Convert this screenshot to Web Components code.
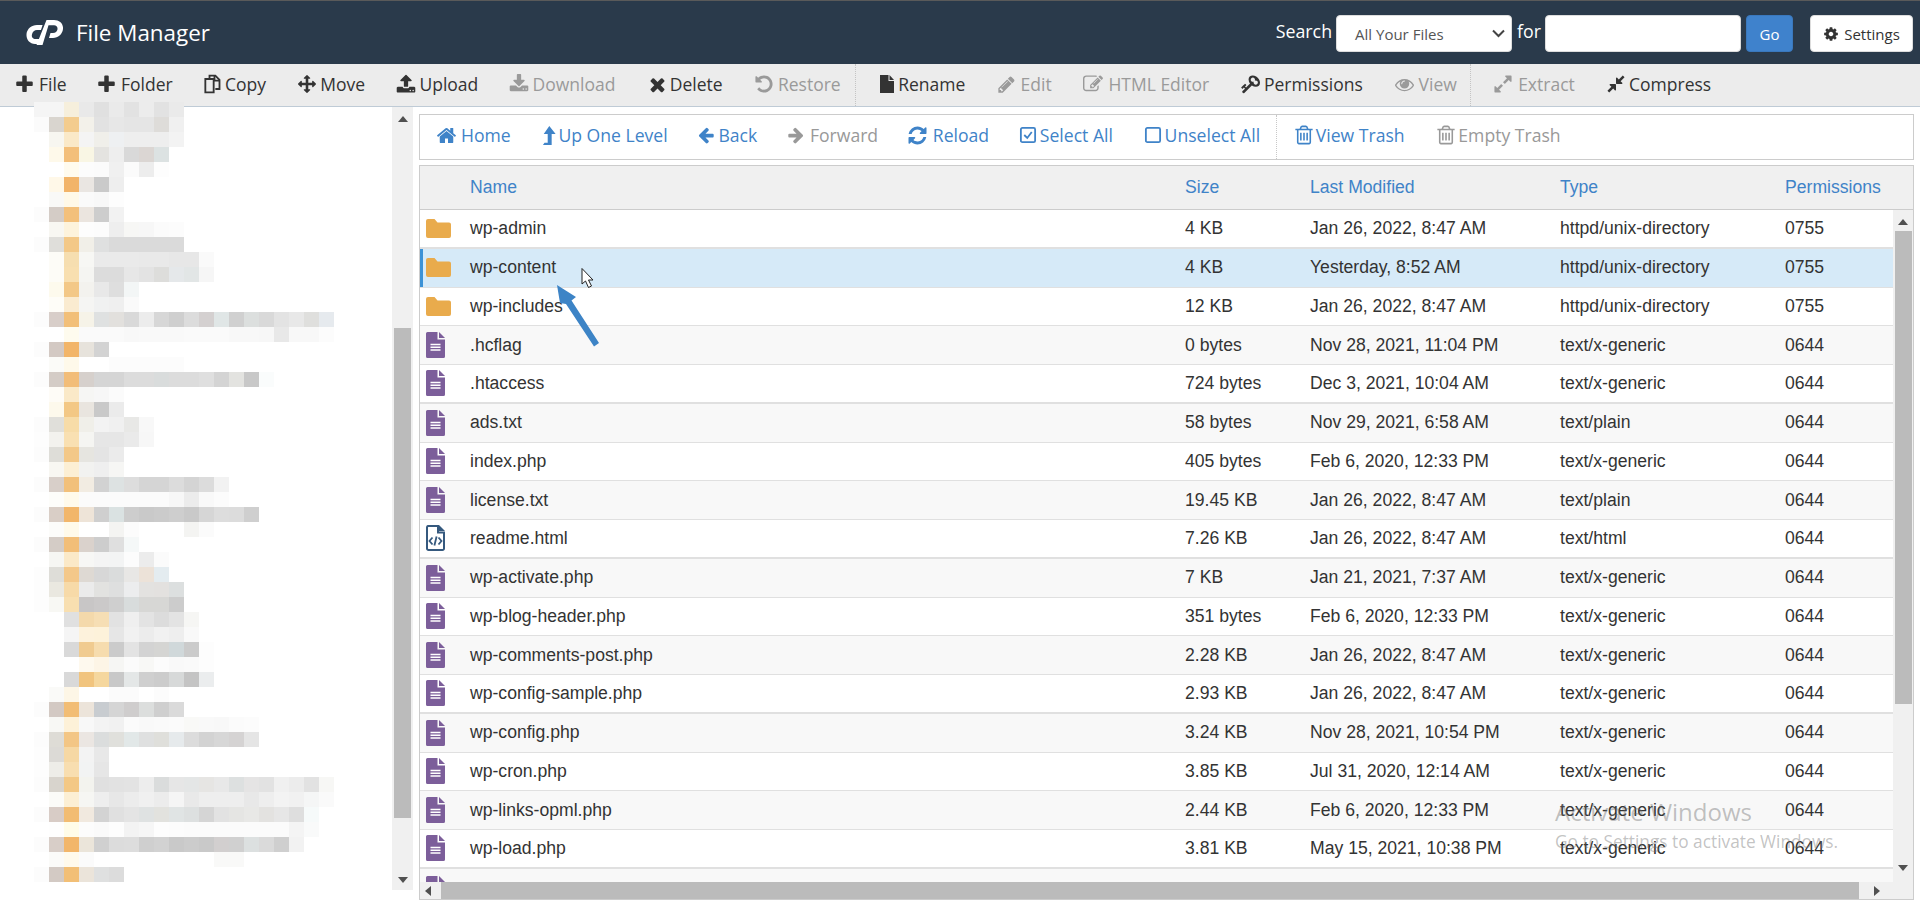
<!DOCTYPE html>
<html><head><meta charset="utf-8"><title>File Manager</title>
<style>
html,body{margin:0;padding:0;width:1920px;height:902px;overflow:hidden;background:#fff;font-family:"Open Sans",sans-serif}
</style></head><body>
<fm-app></fm-app>
<script>
const FA={
plus:'M1600 736v192q0 40-28 68t-68 28h-416v416q0 40-28 68t-68 28h-192q-40 0-68-28t-28-68v-416h-416q-40 0-68-28t-28-68v-192q0-40 28-68t68-28h416v-416q0-40 28-68t68-28h192q40 0 68 28t28 68v416h416q40 0 68 28t28 68z',
move:'M1792 896q0 26-19 45l-256 256q-19 19-45 19t-45-19-19-45v-128h-384v384h128q26 0 45 19t19 45-19 45l-256 256q-19 19-45 19t-45-19l-256-256q-19-19-19-45t19-45 45-19h128v-384h-384v128q0 26-19 45t-45 19-45-19l-256-256q-19-19-19-45t19-45l256-256q19-19 45-19t45 19 19 45v128h384v-384h-128q-26 0-45-19t-19-45 19-45l256-256q19-19 45-19t45 19l256 256q19 19 19 45t-19 45-45 19h-128v384h384v-128q0-26 19-45t45-19 45 19l256 256q19 19 19 45z',
upload:'M1344 1472q0-26-19-45t-45-19-45 19-19 45 19 45 45 19 45-19 19-45zm256 0q0-26-19-45t-45-19-45 19-19 45 19 45 45 19 45-19 19-45zm128-224v320q0 40-28 68t-68 28h-1472q-40 0-68-28t-28-68v-320q0-40 28-68t68-28h427q21 56 70.5 92t110.5 36h256q61 0 110.5-36t70.5-92h427q40 0 68 28t28 68zm-325-648q-17 40-59 40h-256v448q0 26-19 45t-45 19h-256q-26 0-45-19t-19-45v-448h-256q-42 0-59-40-17-39 14-69l448-448q18-19 45-19t45 19l448 448q31 30 14 69z',
download:'M1344 1344q0-26-19-45t-45-19-45 19-19 45 19 45 45 19 45-19 19-45zm256 0q0-26-19-45t-45-19-45 19-19 45 19 45 45 19 45-19 19-45zm128-224v320q0 40-28 68t-68 28h-1472q-40 0-68-28t-28-68v-320q0-40 28-68t68-28h465l135 136q58 56 136 56t136-56l136-136h464q40 0 68 28t28 68zm-325-569q17 41-14 70l-448 448q-18 19-45 19t-45-19l-448-448q-31-29-14-70 17-39 59-39h256v-448q0-26 19-45t45-19h256q26 0 45 19t19 45v448h256q42 0 59 39z',
times:'M1490 1322q0 40-28 68l-136 136q-28 28-68 28t-68-28l-294-294-294 294q-28 28-68 28t-68-28l-136-136q-28-28-28-68t28-68l294-294-294-294q-28-28-28-68t28-68l136-136q28-28 68-28t68 28l294 294 294-294q28-28 68-28t68 28l136 136q28 28 28 68t-28 68l-294 294 294 294q28 28 28 68z',
undo:'M1664 896q0 156-61 298t-164 245-245 164-298 61q-172 0-327-72.5t-264-204.5q-7-10-6.5-22.5t8.5-20.5l137-138q10-9 25-9 16 2 23 12 73 95 179 147t225 52q104 0 198.5-40.5t163.5-109.5 109.5-163.5 40.5-198.5-40.5-198.5-109.5-163.5-163.5-109.5-198.5-40.5q-98 0-188 35.5t-160 101.5l137 138q31 30 14 69-17 40-59 40h-448q-26 0-45-19t-19-45v-448q0-42 40-59 39-17 69 14l130 129q107-101 244.5-156.5t284.5-55.5q156 0 298 61t245 164 164 245 61 298z',
pencil:'M491 1536l91-91-235-235-91 91v107h128v128h107zm523-928q0-22-22-22-10 0-17 7l-542 542q-7 7-7 17 0 22 22 22 10 0 17-7l542-542q7-7 7-17zm-54-192l416 416-832 832h-416v-416zm683 96q0 53-37 90l-166 166-416-416 166-165q36-38 90-38 53 0 91 38l235 234q37 39 37 91z',
edit:'M888 1184l116-116-152-152-116 116v56h96v96h56zm440-720q-16-16-33 1l-350 350q-17 17-1 33t33-1l350-350q17-17 1-33zm80 594v190q0 119-84.5 203.5t-203.5 84.5h-832q-119 0-203.5-84.5t-84.5-203.5v-832q0-119 84.5-203.5t203.5-84.5h832q63 0 117 25 15 7 18 23 3 17-9 29l-49 49q-14 14-32 8-23-6-45-6h-832q-66 0-113 47t-47 113v832q0 66 47 113t113 47h832q66 0 113-47t47-113v-126q0-13 9-22l64-64q15-15 35-7t20 29zm-96-738l288 288-672 672h-288v-288zm444 132l-92 92-288-288 92-92q27-27 68-27t68 27l152 152q27 27 27 68t-27 68z',
key:'M832 512q0-80-56-136t-136-56-136 56-56 136q0 42 19 83-41-19-83-19-80 0-136 56t-56 136 56 136 136 56 136-56 56-136q0-42-19-83 41 19 83 19 80 0 136-56t56-136zm851 704q0 17-49 66t-66 49q-9 0-28.5-16t-36.5-33-38.5-40-24.5-26l-96 96 220 220q28 28 28 68 0 42-39 81t-81 39q-40 0-68-28l-671-671q-176 131-365 131-163 0-265.5-102.5t-102.5-265.5q0-160 95-313t248-248 313-95q163 0 265.5 102.5t102.5 265.5q0 189-131 365l355 355 96-96q-3-3-26-24.5t-40-38.5-33-36.5-16-28.5q0-17 49-66t66-49q13 0 23 10 6 6 46 44.5t82 79.5 86.5 86 73 78 28.5 41z',
eye:'M1664 960q-152-236-381-353 61 104 61 225 0 185-131.5 316.5t-316.5 131.5-316.5-131.5-131.5-316.5q0-121 61-225-229 117-381 353 133 205 333.5 326.5t434.5 121.5 434.5-121.5 333.5-326.5zm-720-384q0-20-14-34t-34-14q-125 0-214.5 89.5t-89.5 214.5q0 20 14 34t34 14 34-14 14-34q0-86 61-147t147-61q20 0 34-14t14-34zm848 384q0 34-20 69-140 230-376.5 368.5t-499.5 138.5-499.5-139-376.5-368q-20-35-20-69t20-69q140-229 376.5-368t499.5-139 499.5 139 376.5 368q20 35 20 69z',
expand:'M883 1056q0 13-10 23l-332 332 144 144q19 19 19 45t-19 45-45 19h-448q-26 0-45-19t-19-45v-448q0-26 19-45t45-19 45 19l144 144 332-332q10-10 23-10t23 10l114 114q10 10 10 23zm781-864v448q0 26-19 45t-45 19-45-19l-144-144-332 332q-10 10-23 10t-23-10l-114-114q-10-10-10-23t10-23l332-332-144-144q-19-19-19-45t19-45 45-19h448q26 0 45 19t19 45z',
compress:'M896 960v448q0 26-19 45t-45 19-45-19l-144-144-332 332q-10 10-23 10t-23-10l-114-114q-10-10-10-23t10-23l332-332-144-144q-19-19-19-45t19-45 45-19h448q26 0 45 19t19 45zm755-672q0 13-10 23l-332 332 144 144q19 19 19 45t-19 45-45 19h-448q-26 0-45-19t-19-45v-448q0-26 19-45t45-19 45 19l144 144 332-332q10-10 23-10t23 10l114 114q10 10 10 23z',
cog:'M1152 896q0-106-75-181t-181-75-181 75-75 181 75 181 181 75 181-75 75-181zm512-109v222q0 12-8 23t-20 13l-185 28q-19 54-39 91 35 50 107 138 10 12 10 25t-9 23q-27 37-99 108t-94 71q-12 0-26-9l-138-108q-44 23-91 38-16 136-29 186-7 28-36 28h-222q-14 0-24.5-8.5t-11.5-21.5l-28-184q-49-16-90-37l-141 107q-10 9-25 9-14 0-25-11-126-114-165-168-7-10-7-23 0-12 8-23 15-21 51-66.5t54-70.5q-27-50-41-99l-183-27q-13-2-21-12.5t-8-23.5v-222q0-12 8-23t19-13l186-28q14-46 39-92-40-57-107-138-10-12-10-24 0-10 9-23 26-36 98.5-107.5t94.5-71.5q13 0 26 10l138 107q44-23 91-38 16-136 29-186 7-28 36-28h222q14 0 24.5 8.5t11.5 21.5l28 184q49 16 90 37l142-107q9-9 24-9 13 0 25 10 129 119 165 170 7 8 7 22 0 12-8 23-15 21-51 66.5t-54 70.5q26 50 41 98l183 28q13 2 21 12.5t8 23.5z',
home:'M1472 992v480q0 26-19 45t-45 19h-384v-384h-256v384h-384q-26 0-45-19t-19-45v-480q0-1 .5-3t.5-3l575-474 575 474q1 2 1 6zm223-69l-62 74q-8 9-21 11h-3q-13 0-21-7l-692-577-692 577q-12 8-24 7-13-2-21-11l-62-74q-8-10-7-23.5t11-21.5l719-599q32-26 76-26t76 26l244 204v-195q0-14 9-23t23-9h192q14 0 23 9t9 23v408l219 182q10 8 11 21.5t-7 23.5z',
left:'M1664 896v128q0 53-32.5 90.5t-84.5 37.5h-704l293 294q38 36 38 90t-38 90l-75 76q-37 37-90 37-52 0-91-37l-651-652q-37-37-37-90 0-52 37-91l651-650q38-38 91-38 52 0 90 38l75 74q38 38 38 91t-38 91l-293 293h704q52 0 84.5 37.5t32.5 90.5z',
right:'M1600 960q0 54-37 91l-651 651q-39 37-91 37-51 0-90-37l-75-75q-38-38-38-91t38-91l293-293h-704q-52 0-84.5-37.5t-32.5-90.5v-128q0-53 32.5-90.5t84.5-37.5h704l-293-294q-38-36-38-90t38-90l75-75q38-38 90-38 53 0 91 38l651 651q37 35 37 90z',
reload:'M1639 1056q0 5-1 7-64 268-268 434.5t-478 166.5q-146 0-282.5-55t-243.5-157l-129 129q-19 19-45 19t-45-19-19-45v-448q0-26 19-45t45-19h448q26 0 45 19t19 45-19 45l-137 137q71 66 161 102t187 36q134 0 250-65t186-179q11-17 53-117 8-23 30-23h192q13 0 22.5 9.5t9.5 22.5zm25-800v448q0 26-19 45t-45 19h-448q-26 0-45-19t-19-45 19-45l138-138q-148-137-349-137-134 0-250 65t-186 179q-11 17-53 117-8 23-30 23h-199q-13 0-22.5-9.5t-9.5-22.5v-7q65-268 270-434.5t480-166.5q146 0 284 55.5t245 156.5l130-129q19-19 45-19t45 19 19 45z',
trash:'M704 736v576q0 14-9 23t-23 9h-64q-14 0-23-9t-9-23v-576q0-14 9-23t23-9h64q14 0 23 9t9 23zm256 0v576q0 14-9 23t-23 9h-64q-14 0-23-9t-9-23v-576q0-14 9-23t23-9h64q14 0 23 9t9 23zm256 0v576q0 14-9 23t-23 9h-64q-14 0-23-9t-9-23v-576q0-14 9-23t23-9h64q14 0 23 9t9 23zm128 724v-948h-896v948q0 22 7 40.5t14.5 27 10.5 8.5h832q3 0 10.5-8.5t14.5-27 7-40.5zm-672-1076h448l-48-117q-7-9-17-11h-317q-10 2-17 11zm928 32v64q0 14-9 23t-23 9h-96v948q0 83-47 143.5t-113 60.5h-832q-66 0-113-58.5t-47-141.5v-952h-96q-14 0-23-9t-9-23v-64q0-14 9-23t23-9h309l70-167q15-37 54-63t79-26h320q40 0 79 26t54 63l70 167h309q14 0 23 9t9 23z'
};
const fa=(n,s,flip)=>`<svg width="${s}" height="${s}" viewBox="0 0 1792 1792" fill="currentColor"${flip?' style="transform:scaleX(-1)"':''}><path d="${FA[n]}"/></svg>`;
const CUSTOM={
copy:s=>`<svg width="${s}" height="${s}" viewBox="0 0 24 24" fill="none" stroke="currentColor" stroke-width="2.2"><path d="M9 5V2h7l5 5v11h-5"/><path d="M15 2v6h6"/><path d="M4 6h10v16H4z"/></svg>`,
level:s=>`<svg width="${s}" height="${s}" viewBox="0 0 24 24" fill="currentColor"><path d="M13 0L21 10h-5v14H5l2-3h4V10H6z"/></svg>`,
check:s=>`<svg width="${s}" height="${s}" viewBox="0 0 24 24" fill="none" stroke="currentColor" stroke-width="2.4"><rect x="2.5" y="2.5" width="19" height="19" rx="2"/><path d="M7 12l4 4 6-8"/></svg>`,
square:s=>`<svg width="${s}" height="${s}" viewBox="0 0 24 24" fill="none" stroke="currentColor" stroke-width="2.4"><rect x="2.5" y="2.5" width="19" height="19" rx="2"/></svg>`,
rename:s=>`<svg width="14" height="${s}" viewBox="0 0 14 18" fill="currentColor"><path d="M0 0H8.500V6H14V18H0z"/><path d="M9.500 0L14 5H9.500z"/></svg>`
};
const icon=(n,s)=>n==='key'?fa(n,s,true):(CUSTOM[n]?CUSTOM[n](s):fa(n,s));
function def(name,css,html){
  customElements.define(name,class extends HTMLElement{
    constructor(){super();const r=this.attachShadow({mode:'open'});r.innerHTML=`<style>${css}</style>`+(typeof html==='function'?html(this):html);}
  });
}
const LOGO=`<svg width="37" height="25" viewBox="0 0 37 25" fill="#fff"><path d="M16.600 5H11C5.500 5 1.200 8.800.5 14 0 19.800 4 24 9 24h3l1.500-5H9.600C7 19 5.400 17.200 5.900 14.700 6.400 12 8.500 10 11 10h4z"/><path d="M20.500 0H28c5.800 0 9.500 4 9 9-.6 5.200-5 9-10 9h-4l1.500-5H27c2.400 0 4.200-1.500 4.500-3.800.3-2.200-1.200-3.900-3.500-3.900h-5.500L16.500 25h-6z"/></svg>`;
def('fm-header',`
:host{display:flex;align-items:center;height:63px;background:#2a3a4b;border-top:1px solid #5a5a5a;padding:0 7px 0 26px;color:#fff;font-family:"Open Sans",sans-serif}
.t{font-size:22.400px;margin-left:13px;line-height:1;margin-top:2px}
.sp{flex:1}
.l{font-size:17.800px;margin-bottom:3px}
.f{box-sizing:border-box;height:37px;background:#fff;border:1px solid #ddd;border-radius:4px;color:#555;font-size:15px;display:flex;align-items:center;margin-top:2px}
.sel{width:176px;margin:2px 5px 0 4px;padding-left:18px;justify-content:space-between;padding-right:6px}
.in{width:196px;margin:2px 5px 0 4px;padding:0}
.go{width:47px;height:37px;background:#3f82cc;color:#fff;border-color:#3a78bd;justify-content:center;margin:2px 17px 0 0;font-size:15px}
.st{width:103px;justify-content:center;gap:5px;color:#333;font-size:15px}
svg{display:block}
`,()=>`${LOGO}<span class="t">File Manager</span><span class="sp"></span><span class="l">Search</span>
<div class="f sel"><span>All Your Files</span><svg width="13" height="9" viewBox="0 0 13 9" fill="none" stroke="#444" stroke-width="2"><path d="M1 1.500l5.500 5.500L12 1.500"/></svg></div>
<span class="l">for</span><input class="f in" aria-label="search"><div class="f go">Go</div>
<div class="f st">${fa('cog',16)}<span>Settings</span></div>`);

def('fm-tool',`
:host{display:inline-flex;align-items:center;color:var(--c,#333);white-space:nowrap;margin-right:var(--gap,29.300px);flex:none;font:var(--tf,17.500px "Open Sans",sans-serif)}
:host([off]){color:var(--o,#9a9a9a)}
.i{width:var(--iw,25px);display:flex;flex:none}
svg{display:block;flex:none;margin-left:var(--im,0)}
`,h=>`<span class="i">${icon(h.getAttribute('icon'),+h.getAttribute('size')||20)}</span><slot></slot>`);

def('fm-toolbar',`
:host{display:flex;align-items:center;box-sizing:border-box;height:43px;background:#ececec;border-bottom:1px solid #bfcbd6;padding:0 0 2px 14px;color:#333}
::slotted(.sep){align-self:stretch;width:0;border-left:1px dotted #c4c4c4;margin-top:0;margin-bottom:-2px}
`,`<slot></slot>`);

def('fm-actions',`
:host{display:flex;align-items:center;box-sizing:border-box;height:46px;background:#fff;border:1px solid #ccc;padding:0 0 4px 16px;margin-top:7px;--c:#3f83c8;--o:#999;--tf:17.600px "Open Sans",sans-serif;--gap:28.700px}
::slotted(.sep){align-self:stretch;width:0;border-left:1px dotted #c8c8c8;margin-bottom:-4px}
`,`<slot></slot>`);

def('fm-scrollbar',`
:host{display:flex;flex-direction:column;align-items:center;flex:none;width:21px;background:#f0f0f0;box-sizing:border-box}
.a{flex:none;width:0;height:0;border:5px solid transparent;}
.u{border-bottom:6px solid #505050;border-top:0}
.d{border-top:6px solid #505050;border-bottom:0}
.th{width:17px;background:#bbb;flex:none}
.sp{flex:1}
`,h=>{const [a,b,c,d]=(h.getAttribute('m')||'0 0 0 0').split(' ');return `<div class="a u" style="margin-top:${a}px"></div><div class="th" style="margin-top:${b}px;height:${c}px"></div><div class="sp"></div><div class="a d" style="margin-bottom:${d}px"></div>`});

const TREE=[[0,'f5 f5 f6efdc e9 e0 ea e2 ec e2 ea',352,'f4f4f3'],[0,'fb d9d5cf f3cc8e f3f1ea e2 e7 e5 e5 dedcd9 f0'],[1,'f7f6f0 fae9c8 f4 f0efea eef0f2 ee ee ee f3'],[1,'fef9ea f3bf7a f9f6e4 e4e3e0 ee d9 dbd6d3 dce2e2'],[1,'ff fffbee fc fb f0 fb ed fd'],[1,'fff8e8 f2b469 eae6e2 ca ee'],[1,'f9f9f7 fff9e8 fa f8 fd'],[0,'fc d4ccc6 f3c07b ebe5df cd f2'],[1,'f8f7f2 fdf3dc fd fc ee f7f7f5 f7 fb fc'],[0,'fc dfdeda f3c887 f1efe8 dfe0e0 da da da da da'],[1,'fdfcf7 f6deb0 f7f7f4 ea ea ea e9 e9 e7 e7 fa'],[1,'fdfcf7 f8dfb0 f5f5f2 dc dc e7 e3 dddddb e5e8ea e2e6e6 f6'],[1,'fdfaed f3c887 f3f2ee e8 de f3f6f6'],[1,'fefdf8 faebd0 f5f5f3 f0f1f1 ef fa'],[0,'fc d8cec9 f2bf78 f6f3e8 dfe1e1 e2e0dd d9 ec d7 cf dc d4d0d0 e0e6e6 d0 dcdfde d9 e3 e8 dfdfdd e6eaee'],[1,'ff fefbee fa fa fa f8 f9 f9 f9 fa fa fa f8 f8 f7 e8 f8 f8 fc'],[0,'fc d3c9c3 f2b568 e7e3dc d3'],[1,'fbfbf8 fef9ea ff ff fc fc fc fc fc'],[0,'fc d4ccc6 f2bd78 d6d0cc d5 d5 dc dc d9dcdc dc dc df d4 e3e3e0 c8 fafcfc'],[1,'fefcf7 fae9c8 f6f6f4 f7 fb'],[1,'fdf9ec f3c885 e9e5df c9 eb'],[0,'fc e0dfda f7dca8 f0efe9 f3 f0 e8e8e6 f8'],[0,'fd f3f2ee f9e0b2 f5f5f2 e6 e6 ea f7'],[0,'fc deddd8 f3c888 e6e5e0 e4 eb'],[1,'f8f7f2 fcefd4 f2f2f0 ef f6f6f4'],[0,'fc d8cfc9 f2c07a f2ece2 d2 dde2e2 dd d5 d5 dc d4 dc f2'],[1,'fdfdfa fffaeb fb fb fb fb fb fb f7 ec f9 fc'],[0,'fc d9cec6 f2b66a eee4d8 cf dae2e2 cd c9 cb ce c9 d6 dd dc cf'],[1,'fcfcfa fffaea ff ff f4f4f2 fc ff ff ff f4f4f2 fb'],[0,'fc d4ccc6 f2be78 dad2cc cd df f5f8f8'],[1,'f6f6f3 fbe9c8 f7f7f5 f4 f3f4f4 fc ec fb'],[0,'fd deddd8 f4c88a ded9d3 d7 dadcdc e8e7e5 ece2d8 e4ecf0'],[0,'fd eae8e0 f7daa8 eb e2e2e0 dedfdf ecedee e3e2e0 e3e1df dcdfdf'],[0,'fd f8f8f4 f8dfb0 c8c6c6 cbc9c9 cf d8dcdc d7d7d5 d7d7d5 cc'],[2,'e0 f4d9ab f6deb4 e2 ef e3 dc e3 f6f6f4'],[2,'f5 fdf2dc fdf2da e6 f1 ec f1 ee f9'],[2,'d9 f0cb90 f6dcae cb e3 d3 d5d5d3 d0d8da cb fd'],[3,'fef9ee fdf5e6 f6f6f4 fb f8f8f6 fc f9 fa fd'],[2,'d9 f1c47e f5d79e c8 e4e7e7 cf cc d7d9d9 c4 ebedee'],[1,'fafaf8 fdf6e6 ff ff fb fb ff fc'],[0,'fc d3c9c3 f2bd74 ece4da c8ccd0 d5 cfcdcd dcdedd cf da'],[1,'f8f8f5 fdf1d8 f8 f3 f1 fb f9 fa fb f9f9f7 f9 f8 fb fc'],[0,'fc dedcd6 f3c685 ebe6e2 dbdddd e0e0dc e2e8e8 dfe0e0 dfdfdb e6eaec dc d3 d7 d5d3d3 e5'],[0,'fd dcdad6 f6d8a4 f3 e8'],[0,'fd eeede8 f8deb0 f2f3f3 e6'],[0,'fc d8d4cd f3c885 f3f3ee e0 e2 e3 ed dadcdc e6 e4e6e6 e6e5e3 e8 dde0e0 e5e4e4 e2 f0 ec e2 f7f7f5'],[1,'fbfbf8 fcefd4 f6f6f3 ee e7 ec f0 ec f5 e9 ee ee ee e8 ee f3 f1 f5f6f6 fa'],[0,'fc d8ccc6 f2bc72 f1e9df d3 e0 e4 dfe2e2 e2e2de e0e4e4 dde0e0 d5 e2 e5e5e3 e8e8e6 e3e2e0 e6 de f6fafa'],[1,'fe fffce8 fc fa fd f3 f6 fd fc fb fb fb fb fb fb fb f4 f9fafa'],[0,'fc d8cec8 f2b66a ebe5da d0 dc dd cf d2 c9 cc c9 d2cfcf d0 dce0e0 da cf f2'],[1,'fbfbf9 fffaec fb ff ff ff ff ff ff ff ff f9f9f8 f9f9f8'],[0,'fc d3cac4 f2bf76 ebe4da dfe0e0 dc']];
const hex=c=>c.length===2?`#${c}${c}${c}`:'#'+c;
def('fm-tree',`
:host{display:flex;flex-direction:column;flex:1;padding-left:34px;margin-top:-5px;position:relative;z-index:1}
.r{display:flex;height:15px;flex:none}
.r i{display:block;width:15px;height:15px;flex:none}
`,()=>TREE.map(([s,cells,w,bg])=>`<div class="r" style="margin-left:${s*15}px;${w?`width:${w}px;background:${bg}`:''}">${cells.split(' ').map(c=>`<i style="background:${hex(c)}"></i>`).join('')}</div>`).join(''));

const FOLDER=`<svg width="25" height="19" viewBox="0 0 25 19"><path fill="#e9ab4c" d="M0 2a2 2 0 0 1 2-2h6.500l3 3.500H23a2 2 0 0 1 2 2V17a2 2 0 0 1-2 2H2a2 2 0 0 1-2-2z"/></svg>`;
const DOC=`<svg width="19" height="26" viewBox="0 0 19 26"><path fill="#7c5e9a" d="M1.500 0H11.500V7.500H19V24.500a1.500 1.500 0 0 1-1.500 1.500H1.500A1.500 1.500 0 0 1 0 24.500V1.500A1.500 1.500 0 0 1 1.500 0z"/><path fill="#7c5e9a" d="M13 0l6 6h-6z"/><path fill="none" stroke="#fff" stroke-width="1.400" d="M4.500 12.500h10M4.500 15.300h10M4.500 18h10"/></svg>`;
const HTML=`<svg width="19" height="26" viewBox="0 0 19 26" fill="none"><path fill="#fff" stroke="#35597e" stroke-width="2" d="M2 1h10v6.500h6V23.500a1.500 1.500 0 0 1-1.500 1.500H2.500A1.500 1.500 0 0 1 1 23.500V2.500A1.500 1.500 0 0 1 2 1z"/><path fill="#35597e" d="M13 0l6 6h-6z"/><path stroke="#35597e" stroke-width="1.800" d="M6.500 12.500L3.500 16l3 3.500M12.500 12.500l3 3.500-3 3.500M10.600 11.500l-2.200 9"/></svg>`;
const GRID='50px 715px 125px 250px 225px 1fr';
def('fm-row',`
:host{display:grid;grid-template-columns:${GRID};align-items:center;box-sizing:border-box;height:38.750px;flex:none;border-bottom:1px solid #e0e0e0;background:#fff;color:#333;font:17.600px "Liberation Sans",Arial,sans-serif;white-space:nowrap}
:host([alt]){background:#f8f8f8}
:host([thick]){border-bottom:2px solid #e0e0e0}
:host([sel]){background:#d6eaf8;box-shadow:inset 3px 0 0 #3c92d6}
.ic{padding-left:6px;display:flex;align-items:center}
svg{display:block}
`,h=>{const k=h.getAttribute('kind');const ico=k==='d'?FOLDER:k==='h'?HTML:DOC;const c=(h.getAttribute('cols')||'').split('|');
return `<div class="ic">${ico}</div>`+c.map(t=>`<div>${t}</div>`).join('')});

def('fm-thead',`
:host{display:grid;grid-template-columns:${GRID};align-items:center;box-sizing:border-box;height:44px;flex:none;background:#f0f0f0;border-bottom:1px solid #ccc;color:#3f83c8;font:17.600px "Liberation Sans",Arial,sans-serif}
`,`<div></div><div>Name</div><div>Size</div><div>Last Modified</div><div>Type</div><div>Permissions</div>`);

const ROWS=[
['d','wp-admin','4 KB','Jan 26, 2022, 8:47 AM','httpd/unix-directory','0755'],
['d','wp-content','4 KB','Yesterday, 8:52 AM','httpd/unix-directory','0755'],
['d','wp-includes','12 KB','Jan 26, 2022, 8:47 AM','httpd/unix-directory','0755'],
['f','.hcflag','0 bytes','Nov 28, 2021, 11:04 PM','text/x-generic','0644'],
['f','.htaccess','724 bytes','Dec 3, 2021, 10:04 AM','text/x-generic','0644'],
['f','ads.txt','58 bytes','Nov 29, 2021, 6:58 AM','text/plain','0644'],
['f','index.php','405 bytes','Feb 6, 2020, 12:33 PM','text/x-generic','0644'],
['f','license.txt','19.45 KB','Jan 26, 2022, 8:47 AM','text/plain','0644'],
['h','readme.html','7.26 KB','Jan 26, 2022, 8:47 AM','text/html','0644'],
['f','wp-activate.php','7 KB','Jan 21, 2021, 7:37 AM','text/x-generic','0644'],
['f','wp-blog-header.php','351 bytes','Feb 6, 2020, 12:33 PM','text/x-generic','0644'],
['f','wp-comments-post.php','2.28 KB','Jan 26, 2022, 8:47 AM','text/x-generic','0644'],
['f','wp-config-sample.php','2.93 KB','Jan 26, 2022, 8:47 AM','text/x-generic','0644'],
['f','wp-config.php','3.24 KB','Nov 28, 2021, 10:54 PM','text/x-generic','0644'],
['f','wp-cron.php','3.85 KB','Jul 31, 2020, 12:14 AM','text/x-generic','0644'],
['f','wp-links-opml.php','2.44 KB','Feb 6, 2020, 12:33 PM','text/x-generic','0644'],
['f','wp-load.php','3.81 KB','May 15, 2021, 10:38 PM','text/x-generic','0644']];
def('fm-table',`
:host{display:flex;flex-direction:column;box-sizing:border-box;height:735px;margin-top:5px;border:1px solid #ccc;overflow:hidden}
.mid{display:flex;flex:1;min-height:0}
.body{flex:1;display:flex;flex-direction:column;overflow:hidden;min-width:0}
.tail{height:40px;flex:none;background:#f8f8f8;padding:7px 0 0 6px}
.h{display:flex;align-items:center;height:17px;flex:none;background:#f0f0f0}
.h .th{height:17px;width:1418px;background:#bbb;margin-left:10px}
.h .l{width:0;height:0;border:5px solid transparent;border-left:0;border-right:6px solid #505050;margin-left:5px}
.h .r{width:0;height:0;border:5px solid transparent;border-right:0;border-left:6px solid #505050;margin-left:15px}
fm-scrollbar{width:20px}
svg{display:block}
`,`<fm-thead></fm-thead><div class="mid"><div class="body">${ROWS.map((r,i)=>`<fm-row kind="${r[0]}" cols="${r.slice(1).join('|')}"${i%2&&i!==1?' alt':''}${i===1?' sel':''}${i%4===0?' thick':''}></fm-row>`).join('')}<div class="tail">${DOC}</div></div><fm-scrollbar m="9 6 473 11"></fm-scrollbar></div><div class="h"><i class="l"></i><i class="th"></i><i class="r"></i></div>`);

def('fm-overlay',`
:host{position:absolute;left:0;top:0;width:1920px;height:902px;pointer-events:none;z-index:5;display:block}
svg{position:absolute;left:0;top:0}
.a,.b{position:absolute;left:1555px;color:rgba(110,110,110,.42);font-family:"Open Sans",sans-serif;white-space:nowrap;line-height:1}
.a{top:800px;font-size:24px}
.b{top:832.500px;font-size:17.300px}
`,`<svg width="1920" height="902"><path fill="#3d84c6" d="M557 285L576 297 571.500 300.500 599 343 594 346.500 566 304 560 303z"/><path fill="#fff" stroke="#222" stroke-width="1" stroke-linejoin="round" d="M582 268.500V284L585.500 281 588.500 287.500 591.500 286 588.500 280H593z"/></svg><div class="a">Activate Windows</div><div class="b">Go to Settings to activate Windows.</div>`);

const T=(ic,label,iw,im,size,off)=>`<fm-tool icon="${ic}"${size?` size="${size}"`:''}${off?' off':''} style="--iw:${iw}px;--im:${im}px">${label}</fm-tool>`;
def('fm-app',`
:host{display:flex;flex-direction:column;width:1920px;height:902px;position:relative;overflow:hidden}
.main{display:flex;flex:1;min-height:0}
.left{display:flex;width:413px;flex:none;height:783px}
.right{display:flex;flex-direction:column;width:1495px;margin-left:6px;flex:none}
.sep{display:block}
`,`<fm-header></fm-header>
<fm-toolbar>
${T('plus','File',25,0,21)}${T('plus','Folder',25,0,21)}${T('copy','Copy',23,0.5,20)}${T('move','Move',25,3,18)}${T('upload','Upload',25,1.5,20)}${T('download','Download',25,1.5,20,1)}${T('times','Delete',25,2.5,21)}${T('undo','Restore',26,2,20,1)}<span class="sep" style="margin-left:-15px;margin-right:22.800px"></span>${T('rename','Rename',19.400,1.400,18)}${T('pencil','Edit',26,2,19,1)}${T('edit','HTML Editor',27.500,2.300,20,1)}${T('key','Permissions',25.500,2,20)}${T('eye','View',26.500,3,19,1)}<span class="sep" style="margin-left:-16px;margin-right:21px"></span>${T('expand','Extract',26,1,20,1)}${T('compress','Compress',25,2,20)}
</fm-toolbar>
<div class="main"><div class="left"><fm-tree></fm-tree><fm-scrollbar m="9 206 490 7"></fm-scrollbar></div>
<div class="right"><fm-actions>
${T('home','Home',25,0,21)}${T('level','Up One Level',19,0,19)}${T('left','Back',22,0.700,18)}${T('right','Forward',24,1,18,1)}${T('reload','Reload',26,0.500,21)}${T('check','Select All',22,1,18)}${T('square','Unselect All',23,2,18)}<span class="sep" style="margin-left:-12.500px;margin-right:16.500px"></span>${T('trash','View Trash',22,-1,22)}${T('trash','Empty Trash',25,2,22,1)}
</fm-actions><fm-table></fm-table></div></div>
<fm-overlay></fm-overlay>`);
</script>
</body></html>
